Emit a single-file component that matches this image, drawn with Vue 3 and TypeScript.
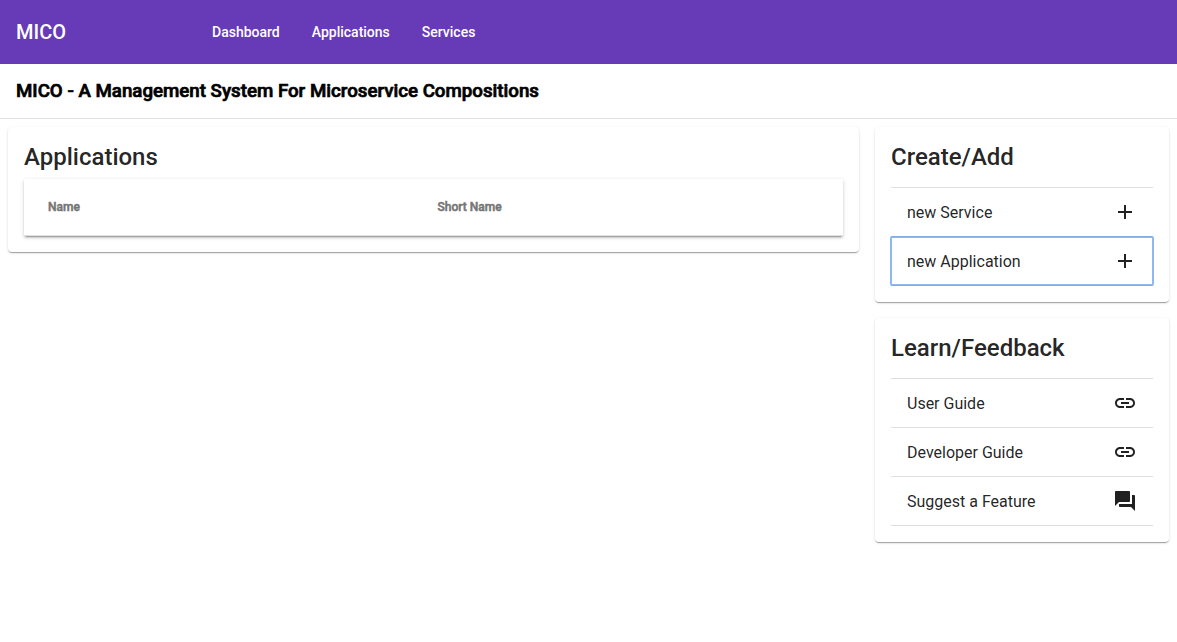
<script setup lang="ts">
interface Action {
  label: string
  icon: 'add' | 'link' | 'forum'
  focused?: boolean
}

const navItems: string[] = ['Dashboard', 'Applications', 'Services']
const columns: string[] = ['Name', 'Short Name']

const panels: { title: string; actions: Action[] }[] = [
  {
    title: 'Create/Add',
    actions: [
      { label: 'new Service', icon: 'add' },
      { label: 'new Application', icon: 'add', focused: true },
    ],
  },
  {
    title: 'Learn/Feedback',
    actions: [
      { label: 'User Guide', icon: 'link' },
      { label: 'Developer Guide', icon: 'link' },
      { label: 'Suggest a Feature', icon: 'forum' },
    ],
  },
]

const icons: Record<Action['icon'], string> = {
  add: 'M19 13h-6v6h-2v-6H5v-2h6V5h2v6h6v2z',
  link: 'M3.9 12c0-1.71 1.39-3.1 3.1-3.1h4V7H7c-2.76 0-5 2.24-5 5s2.24 5 5 5h4v-1.9H7c-1.71 0-3.1-1.39-3.1-3.1zM8 13h8v-2H8v2zm9-6h-4v1.9h4c1.71 0 3.1 1.39 3.1 3.1s-1.39 3.1-3.1 3.1h-4V17h4c2.76 0 5-2.24 5-5s-2.24-5-5-5z',
  forum: 'M21 6h-2v9H6v2c0 .55.45 1 1 1h11l4 4V7c0-.55-.45-1-1-1zm-4 6V3c0-.55-.45-1-1-1H3c-.55 0-1 .45-1 1v14l4-4h10c.55 0 1-.45 1-1z',
}
</script>

<template>
  <div class="page">
    <header class="toolbar">
      <span class="brand">MICO</span>
      <nav class="nav">
        <a v-for="item in navItems" :key="item" class="nav-link">{{ item }}</a>
      </nav>
    </header>
    <div class="heading">
      <h3>MICO - A Management System For Microservice Compositions</h3>
    </div>
    <main class="content">
      <section class="card main-card">
        <h2 class="title">Applications</h2>
        <div class="table">
          <div v-for="column in columns" :key="column" class="cell">{{ column }}</div>
        </div>
      </section>
      <aside class="side">
        <section v-for="panel in panels" :key="panel.title" class="card">
          <h2 class="title">{{ panel.title }}</h2>
          <div class="list">
            <div v-for="action in panel.actions" :key="action.label" class="row">
              <a class="item" :class="{ focused: action.focused }">
                <span>{{ action.label }}</span>
                <svg class="icon" viewBox="0 0 24 24"><path :d="icons[action.icon]" /></svg>
              </a>
            </div>
          </div>
        </section>
      </aside>
    </main>
  </div>
</template>

<style>
body {
  margin: 0;
  background: #fff;
}
</style>

<style scoped>
.page {
  min-height: 642px;
  font-family: Roboto, sans-serif;
  color: rgba(0, 0, 0, 0.87);
}
.toolbar {
  display: flex;
  align-items: center;
  height: 64px;
  padding: 0 16px;
  box-sizing: border-box;
  background: #673ab7;
  color: #fff;
}
.brand {
  width: 180px;
  font-size: 20px;
  font-weight: 500;
}
.nav {
  display: flex;
  gap: 32px;
  padding-left: 16px;
}
.nav-link {
  font-size: 14px;
  font-weight: 500;
}
.heading {
  display: flex;
  align-items: center;
  height: 55px;
  padding: 0 16px;
  box-sizing: border-box;
  border-bottom: 1px solid #e0e0e0;
}
.heading h3 {
  margin: 0;
  color: #000;
  font-size: 18.72px;
  font-weight: 500;
  -webkit-text-stroke: 0.7px #000;
}
.content {
  display: flex;
  align-items: flex-start;
  gap: 16px;
  padding: 8px;
}
.card {
  padding: 16px;
  border-radius: 4px;
  background: #fff;
  box-shadow: 0 2px 1px -1px rgba(0, 0, 0, 0.2), 0 1px 1px 0 rgba(0, 0, 0, 0.14),
    0 1px 3px 0 rgba(0, 0, 0, 0.12);
}
.main-card {
  flex: 1;
}
.side {
  display: flex;
  flex-direction: column;
  gap: 16px;
  width: 294px;
}
.title {
  margin: 0 0 8px;
  font-size: 24px;
  font-weight: 500;
  line-height: 28px;
}
.table {
  display: grid;
  grid-template-columns: 389.5px 1fr;
  align-items: center;
  height: 57px;
  padding: 0 24px;
  box-sizing: border-box;
  border-bottom: 1px solid rgba(0, 0, 0, 0.12);
  box-shadow: 0 3px 1px -2px rgba(0, 0, 0, 0.2), 0 2px 2px 0 rgba(0, 0, 0, 0.14),
    0 1px 5px 0 rgba(0, 0, 0, 0.12);
}
.cell {
  color: #757575;
  font-size: 12px;
  font-weight: 500;
  -webkit-text-stroke: 0.5px #757575;
}
.list {
  margin-top: 16px;
  border-top: 1px solid #e0e0e0;
}
.row {
  border-bottom: 1px solid #e0e0e0;
}
.item {
  display: flex;
  align-items: center;
  justify-content: space-between;
  height: 48px;
  padding: 0 16px;
  box-sizing: border-box;
  font-size: 16px;
}
.focused {
  position: relative;
  border-radius: 1px;
  box-shadow: 0 0 0 1px rgba(59, 135, 235, 0.58), inset 0 0 0 1px rgba(59, 135, 235, 0.58);
}
.icon {
  width: 24px;
  height: 24px;
  fill: currentColor;
}
</style>
